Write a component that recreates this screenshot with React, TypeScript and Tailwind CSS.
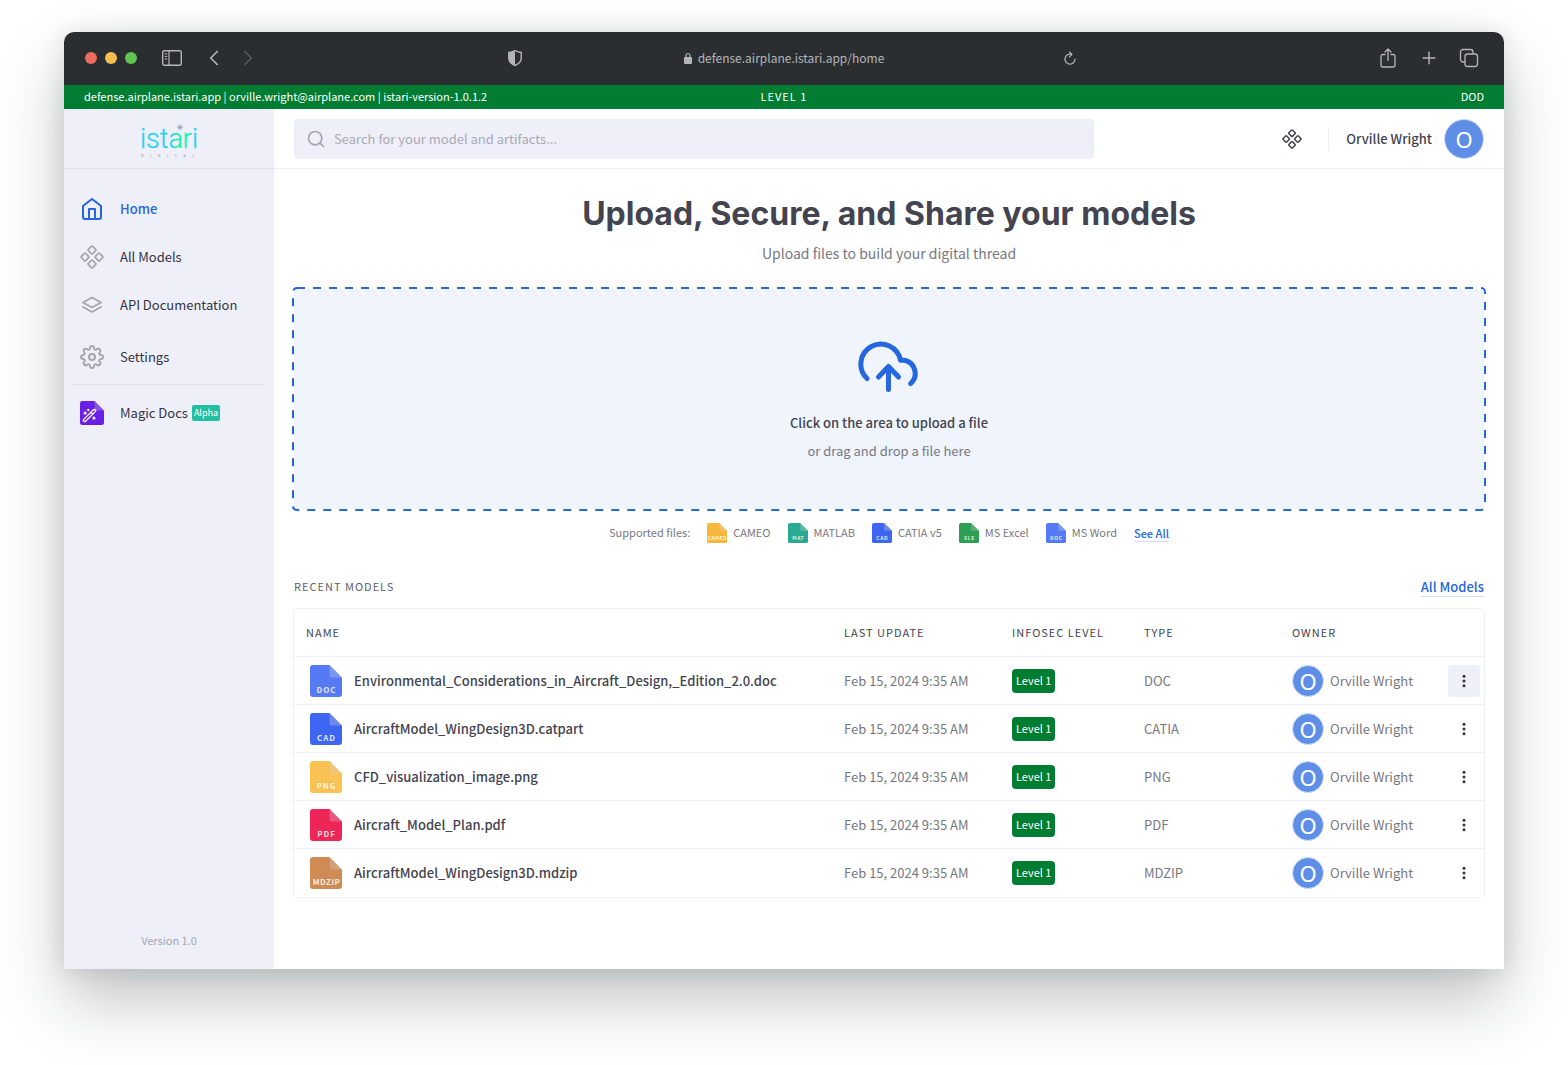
import React from "react";
import { ChevronLeft, ChevronRight, Plus, Search, WandSparkles } from "lucide-react";

type FileKind = { label: string; fill: string };

const supported: (FileKind & { name: string })[] = [
  { label: "CAMEO", fill: "#f7b73c", name: "CAMEO" },
  { label: "MAT", fill: "#2aaa93", name: "MATLAB" },
  { label: "CAD", fill: "#3e66f3", name: "CATIA v5" },
  { label: "XLS", fill: "#2d9f53", name: "MS Excel" },
  { label: "DOC", fill: "#567af6", name: "MS Word" },
];

const models: (FileKind & { name: string; type: string })[] = [
  { label: "DOC", fill: "#567af6", name: "Environmental_Considerations_in_Aircraft_Design,_Edition_2.0.doc", type: "DOC" },
  { label: "CAD", fill: "#3e66f3", name: "AircraftModel_WingDesign3D.catpart", type: "CATIA" },
  { label: "PNG", fill: "#fac253", name: "CFD_visualization_image.png", type: "PNG" },
  { label: "PDF", fill: "#ed2657", name: "Aircraft_Model_Plan.pdf", type: "PDF" },
  { label: "MDZIP", fill: "#d08a54", name: "AircraftModel_WingDesign3D.mdzip", type: "MDZIP" },
];

function FileIcon({ label, fill, className }: FileKind & { className: string }) {
  return (
    <svg viewBox="0 0 32 32" className={className} aria-hidden="true">
      <path d="M3 0H19.500L32 12.500V29a3 3 0 0 1-3 3H3a3 3 0 0 1-3-3V3a3 3 0 0 1 3-3Z" fill={fill} />
      <path d="M19.500 12 32 12.500 19.500 0l-.8 10Z" fill="#000" opacity=".06" />
      <path d="M19.500 0 32 12.500H21.500a2 2 0 0 1-2-2Z" fill="#fff" opacity=".25" />
      {label && (
        <text x="16.500" y="27.500" textAnchor="middle" fill="#fff" fillOpacity=".85" fontSize="8" fontWeight="700" letterSpacing={label.length > 3 ? 0.5 : 1}>
          {label}
        </text>
      )}
    </svg>
  );
}

function DiamondsIcon({ className }: { className: string }) {
  const centers = [[12, 5], [5, 12], [19, 12], [12, 19]];
  return (
    <svg viewBox="0 0 24 24" fill="none" stroke="currentColor" strokeWidth="1.8" className={className} aria-hidden="true">
      {centers.map(([x, y]) => (
        <rect key={`${x}-${y}`} x={x - 3} y={y - 3} width="6" height="6" rx="1" transform={`rotate(45 ${x} ${y})`} />
      ))}
    </svg>
  );
}

function HomeIcon() {
  return (
    <svg viewBox="0 0 24 24" fill="none" stroke="currentColor" strokeWidth="2" strokeLinecap="round" strokeLinejoin="round" className="size-6" aria-hidden="true">
      <path d="M3 9l9-7 9 7v11a2 2 0 0 1-2 2H5a2 2 0 0 1-2-2z" />
      <path d="M9 22V12h6v10" />
    </svg>
  );
}

function LayersIcon() {
  return (
    <svg viewBox="0 0 24 24" fill="none" stroke="currentColor" strokeWidth="1.9" strokeLinecap="round" strokeLinejoin="round" className="size-6" aria-hidden="true">
      <path d="M12 4.500 21 9.500l-9 5-9-5z" />
      <path d="m3 14 9 5 9-5" />
    </svg>
  );
}

function GearIcon() {
  return (
    <svg viewBox="0 0 24 24" fill="none" stroke="currentColor" strokeWidth="2" strokeLinecap="round" strokeLinejoin="round" className="size-6" aria-hidden="true">
      <circle cx="12" cy="12" r="3" />
      <path d="M19.4 15a1.650 1.650 0 0 0 .33 1.820l.06.06a2 2 0 0 1 0 2.830 2 2 0 0 1-2.830 0l-.06-.06a1.650 1.650 0 0 0-1.820-.33 1.650 1.650 0 0 0-1 1.510V21a2 2 0 0 1-2 2 2 2 0 0 1-2-2v-.09A1.650 1.650 0 0 0 9 19.4a1.650 1.650 0 0 0-1.820.33l-.06.06a2 2 0 0 1-2.830 0 2 2 0 0 1 0-2.830l.06-.06a1.650 1.650 0 0 0 .33-1.820 1.650 1.650 0 0 0-1.510-1H3a2 2 0 0 1-2-2 2 2 0 0 1 2-2h.09A1.650 1.650 0 0 0 4.600 9a1.650 1.650 0 0 0-.33-1.820l-.06-.06a2 2 0 0 1 0-2.830 2 2 0 0 1 2.830 0l.06.06a1.650 1.650 0 0 0 1.820.33H9a1.650 1.650 0 0 0 1-1.510V3a2 2 0 0 1 2-2 2 2 0 0 1 2 2v.09a1.650 1.650 0 0 0 1 1.510 1.650 1.650 0 0 0 1.820-.33l.06-.06a2 2 0 0 1 2.830 0 2 2 0 0 1 0 2.830l-.06.06a1.650 1.650 0 0 0-.33 1.820V9a1.650 1.650 0 0 0 1.510 1H21a2 2 0 0 1 2 2 2 2 0 0 1-2 2h-.09a1.650 1.650 0 0 0-1.510 1z" />
    </svg>
  );
}

function Logo() {
  return (
    <svg viewBox="0 0 60 36" className="h-9 w-[60px] overflow-visible" role="img" aria-label="istari digital">
      <defs>
        <linearGradient id="wordmark" gradientUnits="userSpaceOnUse" x1="2" y1="0" x2="58" y2="0">
          <stop offset="0" stopColor="#22d3f0" />
          <stop offset=".56" stopColor="#22d3f0" />
          <stop offset=".64" stopColor="#14f3a6" />
          <stop offset=".9" stopColor="#14f3a6" />
          <stop offset=".92" stopColor="#22d3f0" />
        </linearGradient>
      </defs>
      <text x="30" y="27" textAnchor="middle" fontFamily="Roboto" fontSize="27" fontWeight="300" fill="url(#wordmark)" stroke="url(#wordmark)" strokeWidth=".3">
        istari
      </text>
      <path d="M41 3.500v5.500M38.300 6.300h5.400M39 4.300l4 4M43 4.300l-4 4" stroke="#8c9dbd" strokeWidth=".9" />
      <text x="2" y="36" fontFamily="Roboto" fontSize="4" fontWeight="500" letterSpacing="6.500" fill="#a3a9c6">
        DIGITAL
      </text>
    </svg>
  );
}

function Avatar({ className }: { className: string }) {
  return (
    <span className={`flex shrink-0 items-center justify-center rounded-full border border-[#d5def5] bg-[#5f8ee6] font-['Noto_Sans'] text-[22px] leading-none text-white ${className}`}>
      O
    </span>
  );
}

function BrowserBar() {
  return (
    <div className="grid h-[53px] grid-cols-[1fr_512px_1fr] items-center rounded-t-[10px] bg-[#2b2e31] pb-0.5 text-[#b3b5ba]">
      <div className="flex items-center pr-[5px] pl-[21px]">
        <div className="flex gap-2">
          <span className="size-3 rounded-full bg-[#ed6a5e]" />
          <span className="size-3 rounded-full bg-[#f5bf4f]" />
          <span className="size-3 rounded-full bg-[#61c554]" />
        </div>
        <button type="button" aria-label="Toggle sidebar" className="ml-6">
          <svg viewBox="0 0 22 18" fill="none" stroke="currentColor" strokeWidth="1.400" className="h-[18px] w-[22px]">
            <rect x="1.700" y="1.700" width="18.600" height="14.600" rx="2" />
            <path d="M8 1.700v14.600M3.800 5h2.400M3.800 7.500h2.400M3.800 10h2.400" strokeWidth="1.200" />
          </svg>
        </button>
        <button type="button" aria-label="Back" className="ml-[18px]">
          <ChevronLeft size={26} strokeWidth={1.6} />
        </button>
        <button type="button" aria-label="Forward" className="ml-2 text-[#55585c]">
          <ChevronRight size={26} strokeWidth={1.6} />
        </button>
        <button type="button" aria-label="Privacy report" className="ml-auto">
          <svg viewBox="0 0 16 18" className="h-[18px] w-4">
            <path d="M8 1.500c2 1.200 3.800 1.800 6.200 2v6c0 3.200-2.600 5.400-6.200 7-3.600-1.600-6.200-3.800-6.200-7v-6C4.200 3.300 6 2.700 8 1.500Z" fill="none" stroke="currentColor" strokeWidth="1.400" />
            <path d="M8 1.500v15c-3.600-1.600-6.200-3.800-6.200-7v-6C4.200 3.300 6 2.700 8 1.500Z" fill="currentColor" />
          </svg>
        </button>
      </div>
      <div className="flex items-center justify-center gap-1.5 text-xs leading-5">
        <svg viewBox="0 0 8 12" className="h-3 w-2">
          <path d="M2 6V3.500a2 2 0 0 1 4 0V6" fill="none" stroke="currentColor" strokeWidth="1.200" />
          <rect y="5" width="8" height="7" rx="1" fill="currentColor" />
        </svg>
        defense.airplane.istari.app/home
      </div>
      <div className="flex items-center pr-[25px] pl-6">
        <button type="button" aria-label="Reload">
          <svg viewBox="0 0 12 14" fill="none" stroke="currentColor" strokeWidth="1.200" strokeLinecap="round" strokeLinejoin="round" className="h-3.5 w-3">
            <path d="M7.500 3.300A5 5 0 1 0 11 8M5.500.8l2.500 2.500-2.500 2.500" />
          </svg>
        </button>
        <button type="button" aria-label="Share" className="ml-auto">
          <svg viewBox="0 0 18 20" fill="none" stroke="currentColor" strokeWidth="1.300" strokeLinecap="round" strokeLinejoin="round" className="h-5 w-[18px]">
            <path d="M6 6.500H4A2 2 0 0 0 2 8.500v8.500a2 2 0 0 0 2 2h10a2 2 0 0 0 2-2V8.500a2 2 0 0 0-2-2h-2M9 12.500V1.200M6 4l3-3 3 3" />
          </svg>
        </button>
        <button type="button" aria-label="New tab" className="ml-[22px]">
          <Plus size={20} strokeWidth={1.7} />
        </button>
        <button type="button" aria-label="Tab overview" className="ml-5">
          <svg viewBox="0 0 20 20" fill="none" stroke="currentColor" strokeWidth="1.300" strokeLinejoin="round" className="size-5">
            <rect x="6" y="6" width="12.500" height="12.500" rx="2.500" />
            <path d="M6 14H4a2.500 2.500 0 0 1-2.500-2.500V4A2.500 2.500 0 0 1 4 1.500h7.500A2.500 2.500 0 0 1 14 4v2" />
          </svg>
        </button>
      </div>
    </div>
  );
}

function NavItem({ icon, children, active = false }: { icon: React.ReactNode; children: React.ReactNode; active?: boolean }) {
  return (
    <a href="#" className={active ? "flex h-12 items-center gap-4 px-4 font-medium text-[#2666de]" : "flex h-12 items-center gap-4 px-4 text-[#34353f]"}>
      <span className={active ? "text-[#2666de]" : "text-[#a5a6b0]"}>{icon}</span>
      {children}
    </a>
  );
}

function Sidebar() {
  return (
    <aside className="flex w-[210px] shrink-0 flex-col bg-[#efeffa]">
      <div className="flex h-[60px] items-center justify-center border-b border-[#e0e0ea]">
        <Logo />
      </div>
      <nav className="flex flex-col pt-4">
        <NavItem active icon={<HomeIcon />}>Home</NavItem>
        <NavItem icon={<DiamondsIcon className="size-6" />}>All Models</NavItem>
        <NavItem icon={<LayersIcon />}>API Documentation</NavItem>
        <div className="mx-2 mt-1 mb-1 border-b border-[#dfdfe9] pb-[3px]">
          <div className="-mx-2">
            <NavItem icon={<GearIcon />}>Settings</NavItem>
          </div>
        </div>
        <NavItem
          icon={
            <span className="relative block size-6">
              <FileIcon label="" fill="#6a1fe4" className="size-6" />
              <WandSparkles size={15} strokeWidth={2} className="absolute bottom-0.5 left-0.5 text-white" />
            </span>
          }
        >
          <span className="flex items-center gap-1">
            Magic Docs
            <span className="rounded-xs bg-[#22bfa0] px-0.5 text-[9px] leading-4 text-white">Alpha</span>
          </span>
        </NavItem>
      </nav>
      <p className="mt-auto pb-[19px] text-center text-[11px] leading-5 text-[#a5a6b0]">Version 1.0</p>
    </aside>
  );
}

function TopBar() {
  return (
    <header className="flex h-[60px] items-center border-b border-[#efeffa] px-5">
      <label className="flex h-10 w-[800px] items-center gap-2 rounded bg-[#efeffa] px-3 text-[#a5a6b0]">
        <Search size={20} strokeWidth={2} className="shrink-0" />
        <input type="search" aria-label="Search" placeholder="Search for your model and artifacts..." className="w-full bg-transparent outline-none placeholder:text-[#a9aab3]" />
      </label>
      <div className="ml-auto flex items-center">
        <button type="button" aria-label="Apps" className="text-[#43444f]">
          <DiamondsIcon className="size-5" />
        </button>
        <span className="mr-[17px] ml-[26px] h-6 w-px bg-[#efeffa]" />
        <button type="button" className="flex items-center gap-3 font-medium text-[#43444f]">
          Orville Wright
          <Avatar className="size-10 font-normal" />
        </button>
      </div>
    </header>
  );
}

function DropZone() {
  return (
    <label className="relative flex h-[220px] cursor-pointer flex-col items-center rounded bg-[#eff4fd] pt-[51px]">
      <svg className="pointer-events-none absolute -inset-0.5 h-[224px] w-[calc(100%+4px)]" aria-hidden="true">
        <rect x="1" y="1" rx="4" className="h-[calc(100%-2px)] w-[calc(100%-2px)] fill-none stroke-[#2666de] stroke-2" strokeDasharray="8 8" />
      </svg>
      <svg viewBox="0 0 64 56" fill="none" stroke="#2666de" strokeWidth="5" strokeLinecap="round" strokeLinejoin="round" className="h-14 w-16" aria-hidden="true">
        <path d="M10 38.500A20 20 0 1 1 43.500 20.300H47.500A13.500 13.500 0 0 1 53.700 43.500" />
        <path d="M31.500 49.500V26.500M21.500 37l10-10.500L41.500 37" />
      </svg>
      <span className="mt-[17px] font-medium text-[#43444f]">Click on the area to upload a file</span>
      <span className="mt-2 text-[#77787f]">or drag and drop a file here</span>
      <input type="file" className="sr-only" />
    </label>
  );
}

function ModelsTable() {
  const th = "px-3 pb-0.5 font-normal";
  return (
    <div className="rounded-sm ring-1 ring-[#efeffa]">
      <table className="w-full table-fixed border-separate border-spacing-0 text-left">
        <colgroup>
          <col />
          <col className="w-[168px]" />
          <col className="w-[132px]" />
          <col className="w-[148px]" />
          <col className="w-[160px]" />
          <col className="w-11" />
        </colgroup>
        <thead>
          <tr className="h-12 text-[11px] tracking-[1px] text-[#43444f] *:border-b *:border-[#efeffa]">
            <th className={th}>NAME</th>
            <th className={th}>LAST UPDATE</th>
            <th className={th}>INFOSEC LEVEL</th>
            <th className={th}>TYPE</th>
            <th className={th}>OWNER</th>
            <th aria-label="Actions" />
          </tr>
        </thead>
        <tbody>
          {models.map((m, i) => (
            <tr key={m.name} className="h-12 text-[#77787f] *:border-b *:border-[#efeffa] last:*:border-b-0">
              <td className="pl-4">
                <span className="flex items-center gap-3 font-medium text-[#43444f]">
                  <FileIcon label={m.label} fill={m.fill} className="size-8 shrink-0" />
                  {m.name}
                </span>
              </td>
              <td className="px-3">Feb 15, 2024 9:35 AM</td>
              <td className="px-3">
                <span className="inline-block h-6 rounded bg-[#007d32] px-1 text-[11px] leading-[22px] text-white">Level 1</span>
              </td>
              <td className="px-3">{m.type}</td>
              <td className="pl-3">
                <span className="flex items-center gap-1.5">
                  <Avatar className="size-8" />
                  Orville Wright
                </span>
              </td>
              <td className="pl-2">
                <button
                  type="button"
                  aria-label={`Actions for ${m.name}`}
                  className={i === 0 ? "flex size-8 items-center justify-center rounded bg-[#efeffa] text-[#34353f]" : "flex size-8 items-center justify-center rounded text-[#34353f]"}
                >
                  <svg viewBox="0 0 4 14" fill="currentColor" className="h-3.5 w-1">
                    <circle cx="2" cy="2.200" r="1.500" />
                    <circle cx="2" cy="7" r="1.500" />
                    <circle cx="2" cy="11.800" r="1.500" />
                  </svg>
                </button>
              </td>
            </tr>
          ))}
        </tbody>
      </table>
    </div>
  );
}

export default function App() {
  return (
    <div className="flex min-h-screen flex-col bg-white px-16 pt-8 pb-24 font-['Noto_Sans_CJK_JP',sans-serif] text-[13px] leading-5">
      <div className="flex grow flex-col rounded-t-[10px] shadow-[0_0_24px_rgba(0,0,0,0.1),0_32px_64px_rgba(20,30,30,0.26)]">
        <BrowserBar />
        <div className="grid h-6 grid-cols-3 items-center bg-[#007d32] px-5 pb-0.5 text-[11px] text-white">
          <span className="whitespace-nowrap">defense.airplane.istari.app | orville.wright@airplane.com | istari-version-1.0.1.2</span>
          <span className="text-center tracking-[1px]">LEVEL 1</span>
          <span className="text-right">DOD</span>
        </div>
        <div className="flex grow">
          <Sidebar />
          <div className="flex min-w-0 grow flex-col bg-white">
            <TopBar />
            <main className="px-5 pt-[25px]">
              <h1 className="text-center font-[Inter] text-[32px] leading-10 font-bold text-[#43444f]">Upload, Secure, and Share your models</h1>
              <p className="mt-[7px] text-center text-sm leading-6 text-[#77787f]">Upload files to build your digital thread</p>
              <div className="mt-6">
                <DropZone />
              </div>
              <div className="mt-[13px] flex items-center justify-center gap-[17px] text-[11px] text-[#77787f]">
                <span className="pb-0.5">Supported files:</span>
                {supported.map((f) => (
                  <span key={f.name} className="flex items-center gap-1.5">
                    <FileIcon label={f.label} fill={f.fill} className="size-5" />
                    <span className="pb-0.5">{f.name}</span>
                  </span>
                ))}
                <a href="#" className="border-b border-[#cfdefa] leading-4 font-medium text-[#2666de]">See All</a>
              </div>
              <div className="mt-8 mb-[11px] flex items-center justify-between">
                <h2 className="pb-0.5 text-[11px] tracking-[1px] text-[#5e5f69]">RECENT MODELS</h2>
                <a href="#" className="border-b border-[#cfdefa] leading-[19px] font-medium text-[#2666de]">All Models</a>
              </div>
              <ModelsTable />
            </main>
          </div>
        </div>
      </div>
    </div>
  );
}
